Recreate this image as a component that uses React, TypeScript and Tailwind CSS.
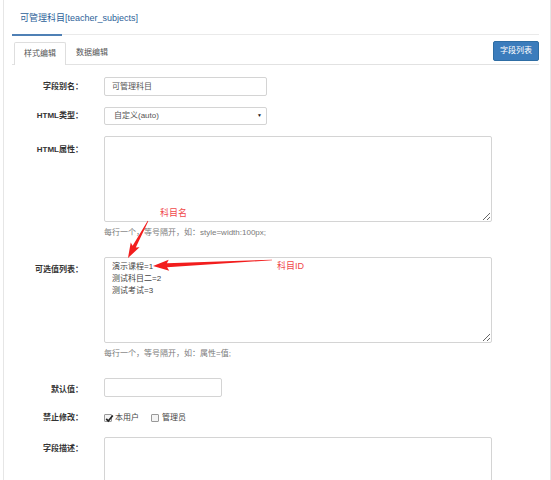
const font = { fontFamily: '"Liberation Sans", "Noto Sans CJK SC", sans-serif' };

type Pt = [number, number];

function arrowPoints(tail: Pt, tip: Pt, head = 13, half = 5, shaft = 1.8) {
  const dx = tip[0] - tail[0];
  const dy = tip[1] - tail[1];
  const len = Math.hypot(dx, dy);
  const ux = dx / len;
  const uy = dy / len;
  const nx = -uy;
  const ny = ux;
  const bx = tip[0] - ux * head;
  const by = tip[1] - uy * head;
  const cx = bx - ux * 2;
  const cy = by - uy * 2;
  const pts: Pt[] = [
    [tail[0] + nx * 0.3, tail[1] + ny * 0.3],
    [bx + nx * shaft, by + ny * shaft],
    [cx + nx * half, cy + ny * half],
    tip,
    [cx - nx * half, cy - ny * half],
    [bx - nx * shaft, by - ny * shaft],
    [tail[0] - nx * 0.3, tail[1] - ny * 0.3],
  ];
  return pts.map((p) => p.join(",")).join(" ");
}

function Label({ text, pt = "pt-[4px]" }: { text: string; pt?: string }) {
  return (
    <div className={`w-[71px] shrink-0 text-right text-[8px] leading-[12px] font-bold text-[#333] ${pt}`}>
      {text}
    </div>
  );
}

function Checkbox({ checked, label }: { checked?: boolean; label: string }) {
  return (
    <div className="flex items-center gap-[3px]">
      <span className="w-[8px] h-[8px] border border-[#999] rounded-[1px] bg-[#f4f4f4] relative flex items-center justify-center">
        {checked && (
          <svg width="9" height="9" viewBox="0 0 9 9" className="absolute -top-[1px] left-0">
            <path d="M1.2 4.8 L3.3 7 L7.8 1.5" fill="none" stroke="#222" strokeWidth="1.7" />
          </svg>
        )}
      </span>
      <span className="text-[8px] leading-[12px] text-[#444]">{label}</span>
    </div>
  );
}

export default function App() {
  return (
    <div className="relative w-[551px] h-[480px] overflow-hidden bg-white" style={font}>
      <div className="ml-[3px] w-[548px] h-full border-x border-[#e6e6e6] pl-[8px] pr-[11px]">
        {/* header */}
        <div className="h-[34px] flex items-center pl-[8px] pt-[3px] text-[9px] text-[#2d5f99]">
          可管理科目[teacher_subjects]
        </div>
        <div className="h-px bg-[#eaeaea]">
          <div className="w-[50px] h-[2px] bg-[#4f80b5]" />
        </div>

        {/* tabs */}
        <div className="mt-[6px] flex justify-between border-b border-[#e2e2e2]">
          <div className="flex items-end">
            <div className="ml-[2px] h-[23px] px-[9px] border border-b-0 border-[#dedede] rounded-t-[2px] bg-white -mb-px flex items-center text-[8px] text-[#555]">
              样式编辑
            </div>
            <div className="h-[23px] px-[10px] flex items-center text-[8px] text-[#555]">数据编辑</div>
          </div>
          <div className="mb-[3px] h-[20px] w-[46px] rounded-[2px] bg-[#3b7cbc] border border-[#2e6da4] flex items-center justify-center text-[8px] text-white">
            字段列表
          </div>
        </div>

        {/* form */}
        <div className="flex mt-[12px]">
          <Label text="字段别名：" />
          <div className="ml-[21px] w-[163px] h-[19px] border border-[#d4d4d4] rounded-[2px] flex items-center pl-[7px] text-[8px] text-[#555]">
            可管理科目
          </div>
        </div>

        <div className="flex mt-[11px]">
          <Label text="HTML类型：" pt="pt-[3px]" />
          <div className="ml-[21px] w-[163px] h-[18px] border border-[#d4d4d4] rounded-[2px] flex items-center justify-between pl-[9px] pr-[4px] text-[8px] text-[#555]">
            <span>自定义(auto)</span>
            <span className="text-[5px] text-[#222]">▼</span>
          </div>
        </div>

        <div className="flex mt-[11px]">
          <Label text="HTML属性：" pt="pt-[8px]" />
          <textarea
            readOnly
            className="ml-[21px] w-[388px] h-[86px] border border-[#d4d4d4] rounded-[2px] outline-none"
          />
        </div>
        <div className="mt-[5px] ml-[92px] text-[8px] leading-[12px] text-[#7a7a7a]">
          每行一个，等号隔开，如：style=width:100px;
        </div>

        <div className="flex mt-[18px]">
          <Label text="可选值列表：" pt="pt-[7px]" />
          <textarea
            readOnly
            className="ml-[21px] w-[388px] h-[86px] border border-[#d4d4d4] rounded-[2px] outline-none pl-[7px] pt-[3px] text-[8px] leading-[12px] text-[#444] resize-y"
            value={"演示课程=1\n测试科目二=2\n测试考试=3"}
          />
        </div>
        <div className="mt-[5px] ml-[92px] text-[8px] leading-[12px] text-[#7a7a7a]">
          每行一个，等号隔开，如：属性=值;
        </div>

        <div className="flex mt-[18px]">
          <Label text="默认值：" pt="pt-[6px]" />
          <div className="ml-[21px] w-[118px] h-[19px] border border-[#d4d4d4] rounded-[2px]" />
        </div>

        <div className="flex mt-[15px] items-center">
          <Label text="禁止修改：" pt="pt-0" />
          <div className="ml-[21px] flex items-center gap-[12px]">
            <Checkbox checked label="本用户" />
            <Checkbox label="管理员" />
          </div>
        </div>

        <div className="flex mt-[13px]">
          <Label text="字段描述：" pt="pt-[6px]" />
          <textarea
            readOnly
            className="ml-[21px] w-[388px] h-[86px] border border-[#d4d4d4] rounded-[2px] outline-none"
          />
        </div>
      </div>

      {/* red annotations */}
      <svg className="absolute left-0 top-0 pointer-events-none" width="551" height="480">
        <polygon points={arrowPoints([148, 221], [128, 258])} fill="#f21d1d" />
        <polygon points={arrowPoints([272, 260], [153, 266], 14, 5.5, 2)} fill="#f21d1d" />
      </svg>
      <div className="absolute left-[160px] top-[207px] text-[9px] leading-[12px] text-[#f0484a]">科目名</div>
      <div className="absolute left-[277px] top-[260px] text-[9px] leading-[12px] text-[#f0484a]">科目ID</div>
    </div>
  );
}
